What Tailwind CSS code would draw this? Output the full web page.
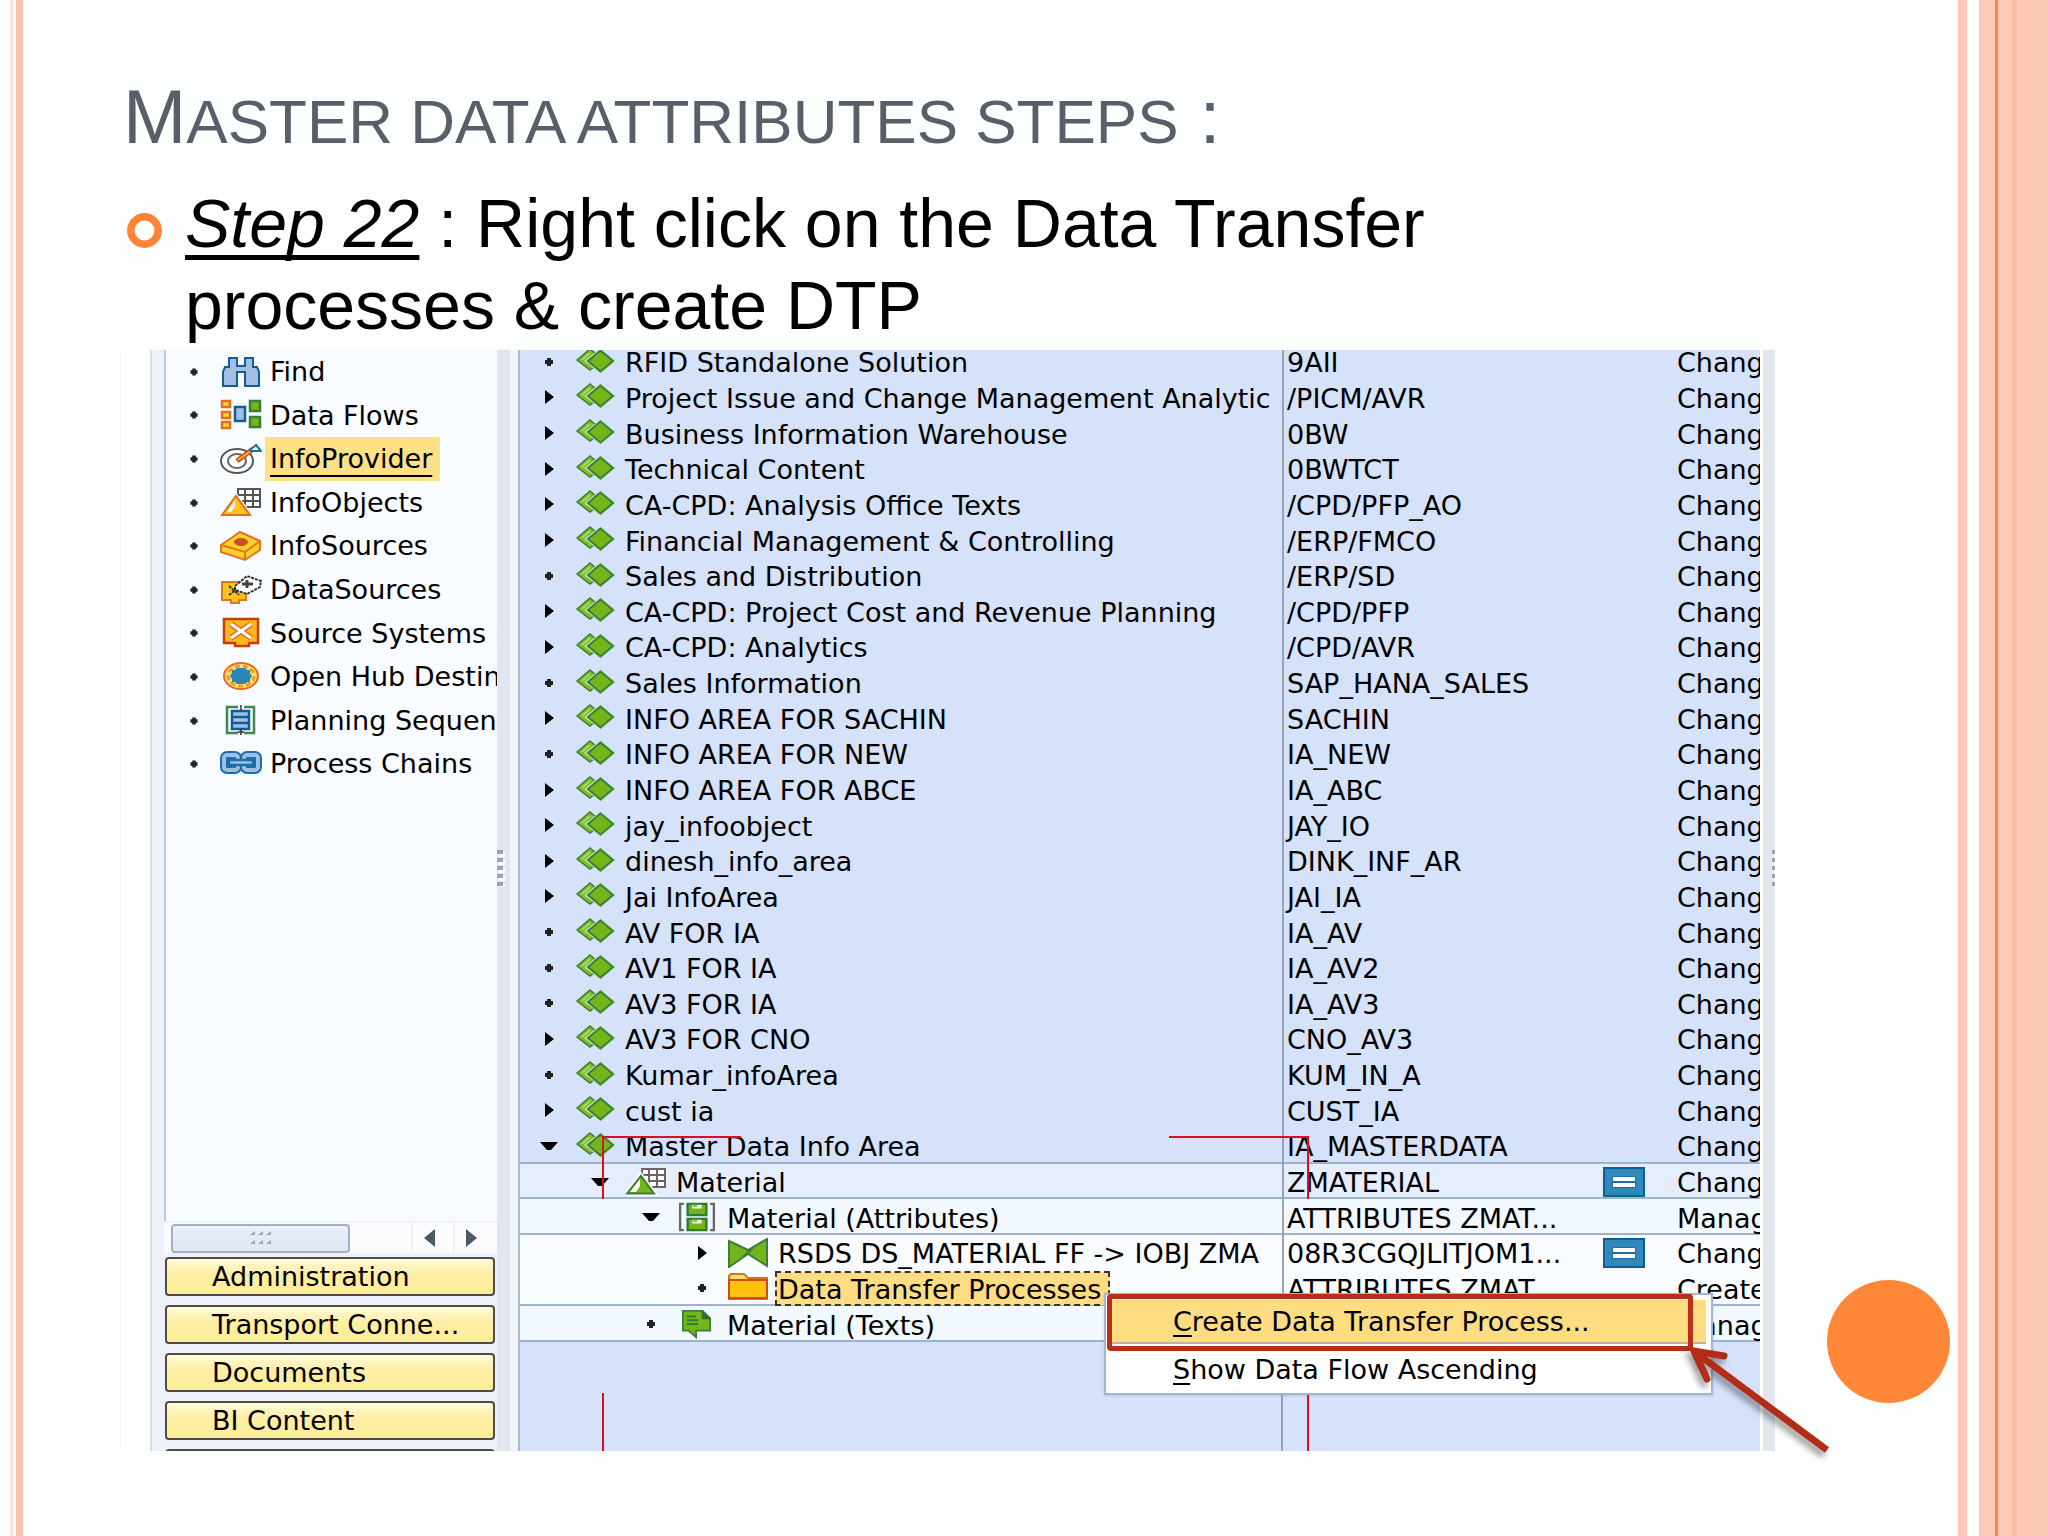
<!DOCTYPE html>
<html lang="en">
<head>
  <meta charset="UTF-8">
  <meta name="viewport" content="width=device-width, initial-scale=1.0">
  <title>Master data attributes steps</title>
  <script src="https://cdn.jsdelivr.net/npm/@tailwindcss/browser@4"></script>
</head>
<body class="bg-[#fdfffe] font-['Liberation_Sans',Arial,sans-serif] text-black">

  <!-- icon set -->
  <svg class="hidden" xmlns="http://www.w3.org/2000/svg">
    <symbol id="dot" viewBox="0 0 18 18"><path d="M7 5h4v2h2v4h-2v2H7v-2H5V7h2z" fill="#222"/></symbol>
    <symbol id="closed" viewBox="0 0 18 18"><path d="M5 2l9 7-9 7z" fill="#000"/></symbol>
    <symbol id="open" viewBox="0 0 18 18"><path d="M0 5h18l-7 8H7z" fill="#000"/></symbol>
    <symbol id="area" viewBox="0 0 42 30">
      <path d="M3 13L16 2l13 11-13 10z" fill="#7cbf1f" stroke="#3d7d3c" stroke-width="1.500"/>
      <path d="M8 13l8-7M12 16l7-8" stroke="#b5df90" stroke-width="1.500"/>
      <path d="M13 14L26.500 3.500 39 14 26.500 24.500z" fill="#74b61a" stroke="#b9dfa6" stroke-width="3.500"/>
      <path d="M14 14L26.500 3.500 39 14 26.500 24.500z" fill="#74b61a" stroke="#3d7d3c" stroke-width="2"/>
    </symbol>
    <symbol id="material" viewBox="0 0 42 30">
      <path d="M17 2h23v18H17z" fill="#fff" stroke="#6b6468" stroke-width="2"/>
      <path d="M17 8h23M17 14h23M24 2v18M32 2v18" stroke="#6b6468" stroke-width="2"/>
      <path d="M1 27L16 8l14 19z" fill="#74b61a" stroke="#fff" stroke-width="4"/>
      <path d="M2 26.500L16 9l13 17.500z" fill="#74b61a" stroke="#3d7d3c" stroke-width="2"/>
      <path d="M5 25L15 12v7l-4 6z" fill="#fff"/>
    </symbol>
    <symbol id="attributes" viewBox="0 0 42 32">
      <path d="M7 2H3v28h4M35 2h4v28h-4" fill="none" stroke="#6b6468" stroke-width="2.500"/>
      <path d="M11 2h20v12H11zM11 18h20v12H11z" fill="#74b61a" stroke="#2f7a33" stroke-width="2.500"/>
      <path d="M16 3h10v4H16zM16 19h10v4H16z" fill="#e9f6dc"/>
      <path d="M17 3h4v2h-4zM17 19h4v2h-4z" fill="#74b61a"/>
    </symbol>
    <symbol id="transform" viewBox="0 0 42 30">
      <path d="M2 3l19 9L40 1v27L21 16 2 29z" fill="#74b61a" stroke="#3d7d3c" stroke-width="2"/>
      <path d="M16 19L26 10" stroke="#3d7d3c" stroke-width="2"/>
    </symbol>
    <symbol id="folder" viewBox="0 0 42 30">
      <path d="M2 26V3l2-2h13l4 4h19v21z" fill="#ffd977" stroke="#d9701c" stroke-width="2"/>
      <path d="M2 7h38v18H2z" fill="#ffc20e" stroke="#d04a12" stroke-width="2"/>
    </symbol>
    <symbol id="texts" viewBox="0 0 42 32">
      <path d="M6 2h21l8 8v13H20v7l-8-7H6z" fill="#74b61a" stroke="#3d7d3c" stroke-width="2"/>
      <path d="M26 1l10 10H26z" fill="#2f6b3a"/>
      <path d="M10 8h10M10 12h12M10 16h12" stroke="#2f7a33" stroke-width="2"/>
    </symbol>
    <symbol id="equal" viewBox="0 0 42 30">
      <path d="M1 1h40v28H1z" fill="#3189bb" stroke="#0b5f93" stroke-width="2"/>
      <path d="M9 9h24v12H9z" fill="#1f6f9f"/>
      <path d="M10 10h22v4H10zM10 16h22v4H10z" fill="#fff"/>
    </symbol>

    <symbol id="find" viewBox="0 0 42 32">
      <path d="M9 2h8v8h8V2h8v9h4l2 5v14H25V16h-8v14H3V16l2-5h4z" fill="#a3bfe4" stroke="#0f5f96" stroke-width="2"/>
    </symbol>
    <symbol id="flows" viewBox="0 0 42 32">
      <path d="M2 2h8v6H2zM2 13h8v6H2zM2 23h8v6H2z" fill="#ffd23c" stroke="#e0701e" stroke-width="2.500"/>
      <path d="M15 8h10v14H15z" fill="#a3bfe4" stroke="#0f5f96" stroke-width="2.500"/>
      <path d="M30 2h10v10H30zM30 18h10v10H30z" fill="#74b61a" stroke="#3d7d3c" stroke-width="2.500"/>
    </symbol>
    <symbol id="provider" viewBox="0 0 42 32">
      <ellipse cx="17" cy="18" rx="16" ry="12" fill="#fff" stroke="#555" stroke-width="2"/>
      <ellipse cx="17" cy="18" rx="9" ry="7" fill="#fff" stroke="#666" stroke-width="2"/>
      <path d="M17 18L33 6" stroke="#c8501a" stroke-width="5"/>
      <path d="M18 17L32 7" stroke="#ffae2b" stroke-width="2"/>
      <path d="M30 7l6-5 5 6H31z" fill="#fff" stroke="#1a6fa8" stroke-width="2"/>
    </symbol>
    <symbol id="objects" viewBox="0 0 42 32">
      <path d="M18 2h22v18H18z" fill="#fff" stroke="#555" stroke-width="2"/>
      <path d="M18 8h22M18 14h22M25 2v18M33 2v18" stroke="#555" stroke-width="2"/>
      <path d="M1 28L16 8l15 20z" fill="#fff" stroke="#fff" stroke-width="3"/>
      <path d="M2 28L16 9l14 19z" fill="#ffc21e" stroke="#e0701e" stroke-width="2"/>
      <path d="M7 25l8-12v6l-4 6z" fill="#fff"/>
    </symbol>
    <symbol id="sources" viewBox="0 0 42 32">
      <path d="M1 15L20 2l20 9v9L25 30 1 22z" fill="#ffcf2e" stroke="#e0761e" stroke-width="2"/>
      <path d="M1 15l24 7 15-11M25 22v8" fill="none" stroke="#e0761e" stroke-width="2"/>
      <ellipse cx="21" cy="12" rx="7" ry="4" fill="#c9501a"/>
    </symbol>
    <symbol id="datasources" viewBox="0 0 42 32">
      <path d="M2 8h24v18h-7v3h-8v-3H2z" fill="#ffc21e" stroke="#e0761e" stroke-width="2"/>
      <path d="M9 12l10 9M9 21l8-6" stroke="#333" stroke-width="2" stroke-dasharray="3 1"/>
      <path d="M15 12L27 2l14 5-1 6-13 7-12-4z" fill="#fff" stroke="#333" stroke-width="2" stroke-dasharray="3 1"/>
      <path d="M22 10h11M27 6v8" stroke="#444" stroke-width="3"/>
    </symbol>
    <symbol id="systems" viewBox="0 0 42 32">
      <path d="M4 2h34v24h-9v3H15v-3H4z" fill="#ffb71c" stroke="#c63d12" stroke-width="2.500"/>
      <path d="M11 7l20 14M31 7L11 21" stroke="#e0701e" stroke-width="6"/>
      <path d="M11 7l20 14M31 7L11 21" stroke="#fff" stroke-width="3"/>
    </symbol>
    <symbol id="hub" viewBox="0 0 42 32">
      <ellipse cx="21" cy="15" rx="17" ry="13" fill="#ffe07a" stroke="#e0701e" stroke-width="2"/>
      <ellipse cx="21" cy="15" rx="13" ry="10" fill="none" stroke="#f59a1e" stroke-width="3" stroke-dasharray="5 3"/>
      <path d="M17 7h8l2 2h3v3l2 3-2 3v3h-3l-2 2h-8l-2-2h-3v-3l-2-3 2-3V9h3z" fill="#2d86b8"/>
    </symbol>
    <symbol id="sequence" viewBox="0 0 42 32">
      <path d="M18 2H7v26h11M24 2h10v26H24" fill="none" stroke="#3d8a4c" stroke-width="2.500"/>
      <path d="M12 6h17v18H12z" fill="#a3bfe4" stroke="#0f5f96" stroke-width="2.500"/>
      <path d="M12 12h17M12 18h17" stroke="#0f5f96" stroke-width="2.500"/>
      <path d="M21 0v6M21 24v6M18 27h6" stroke="#333" stroke-width="1.500"/>
    </symbol>
    <symbol id="chains" viewBox="0 0 42 32">
      <rect x="4" y="7" width="14" height="15" rx="3" fill="none" stroke="#1a6fa8" stroke-width="8"/>
      <rect x="24" y="7" width="14" height="15" rx="3" fill="none" stroke="#1a6fa8" stroke-width="8"/>
      <rect x="4" y="7" width="14" height="15" rx="3" fill="none" stroke="#9dbfe3" stroke-width="4"/>
      <rect x="24" y="7" width="14" height="15" rx="3" fill="none" stroke="#9dbfe3" stroke-width="4"/>
      <rect x="9" y="12" width="24" height="5" fill="#9dbfe3" stroke="#1a6fa8" stroke-width="2.500"/>
    </symbol>
    <symbol id="grip" viewBox="0 0 8 37">
      <path d="M2 2h6v5H2zM2 10h6v5H2zM2 18h6v5H2zM2 26h6v5H2zM2 34h6v3H2z" fill="#fff"/>
      <path d="M0 0h6v4H0zM0 8h6v4H0zM0 16h6v4H0zM0 24h6v4H0zM0 32h6v4H0z" fill="#9aa3ad"/>
    </symbol>
  </svg>

  <div class="flex min-h-screen overflow-hidden relative">
    <!-- left stripes -->
    <div class="w-[3px] ml-[10px] bg-[#fee0d8]"></div>
    <div class="w-[7px] ml-[3px] bg-[#febfb0]"></div>

    <main class="flex-1 min-w-0 pl-[97px] pt-[75px]">
      <h1 class="pl-[3px] text-[62px] leading-[84px] uppercase text-[#5a5e6b] first-letter:text-[76px]">Master data attributes steps<span class="text-[76px]"> :</span></h1>

      <div class="flex mt-[18px] pl-[7px] text-[68px] leading-[82px]">
        <svg class="w-[35px] h-[35px] mt-[31px] mr-[23px] shrink-0" viewBox="0 0 35 35"><circle cx="17.500" cy="17.500" r="13.700" fill="none" stroke="#ff8436" stroke-width="7.500"/></svg>
        <p class="max-w-[1300px]"><em class="underline decoration-[5px] underline-offset-[8px] [text-decoration-skip-ink:none]">Step 22</em> : Right click on the Data Transfer processes &amp; create DTP</p>
      </div>

      <!-- SAP screen -->
      <div class="relative flex h-[1101px] mt-[4px] mr-[183px] border-l border-[#f8f4f6] font-['DejaVu_Sans',Verdana,sans-serif] text-[27px] leading-[31px]">
        <aside class="flex flex-col w-[347px] ml-[29px] pl-[12px] border-l-2 border-[#d8dcec] bg-[#eef1f9] shrink-0 overflow-hidden">
          <nav class="h-[871px] border-l-2 border-[#b9c8e4] bg-[#f8fbff] overflow-hidden shrink-0">
            <ul id="nav" class="grid grid-rows-10 h-[436px]"></ul>
          </nav>
          <div class="flex items-center h-[30px] mt-[2px] bg-[#fcfcff] shrink-0">
            <div class="flex items-center justify-center w-[179px] h-[29px] ml-[7px] border-2 border-[#a3b0c2] rounded-sm bg-linear-to-b from-[#eaf0fa] to-[#dfe7f5]">
              <svg class="w-[22px] h-[14px]" viewBox="0 0 22 14"><path d="M0 4h5V0zM8 4h5V0zM16 4h5V0zM0 13h5V9zM8 13h5V9zM16 13h5V9z" fill="#98a3b4"/></svg>
            </div>
            <button aria-label="Scroll left" class="ml-auto w-[42px] h-full flex items-center justify-center border-l-2 border-[#f0f2f8]"><svg class="w-[12px] h-[18px] mr-[8px]" viewBox="0 0 12 18"><path d="M12 0v18L1 9z" fill="#4a5a66"/></svg></button>
            <button aria-label="Scroll right" class="w-[44px] h-full flex items-center justify-center border-l-2 border-[#f0f2f8]"><svg class="w-[12px] h-[18px] mr-[8px]" viewBox="0 0 12 18"><path d="M0 0v18L11 9z" fill="#4a5a66"/></svg></button>
          </div>
          <div id="buttons" class="flex flex-col flex-1 min-h-0 gap-[9px] mt-[4px] ml-[1px] mr-[2px] overflow-hidden"></div>
        </aside>

        <!-- splitter -->
        <div class="flex items-center w-[13px] bg-[#dfe6ef] shrink-0">
          <svg class="w-[8px] h-[37px] mb-[64px]"><use href="#grip"/></svg>
        </div>
        <div class="w-[8px] bg-[#f1f4f9] shrink-0"></div>

        <section class="flex-1 min-w-0 border-l-2 border-[#a9bccb] bg-[#d6e2fa] overflow-hidden flex flex-col">
          <table class="w-full h-[998px] mt-[-6px] table-fixed border-collapse whitespace-nowrap shrink-0">
            <colgroup><col><col class="w-[394px]"><col class="w-[83px]"></colgroup>
            <tbody id="tree"></tbody>
          </table>
          <div class="flex flex-1">
            <div class="flex-1 border-r-2 border-[#97a3bb]"></div>
            <div class="w-[477px]"></div>
          </div>
        </section>
        <div class="flex items-center justify-end w-[15px] border-l-3 border-white bg-[#e0e7ef] shrink-0">
          <div class="overflow-hidden w-[3px] mb-[64px]"><svg class="w-[8px] h-[37px]"><use href="#grip"/></svg></div>
        </div>

        <!-- selection guides -->
        <svg class="absolute left-[-1px] top-0 w-[1655px] h-[1101px] pointer-events-none" viewBox="0 0 1655 1101" fill="none" stroke="#d9101c" stroke-width="2">
          <path d="M621 787H483V849M1049 787H1188V849M483 1043V1101M1188 1043V1101"/>
        </svg>

        <!-- context menu -->
        <div role="menu" class="absolute left-[983px] top-[943px] w-[609px] h-[102px] pt-[5px] pl-[6px] pr-[5px] bg-white border-2 border-[#a4b4d4] shadow-sm">
          <button role="menuitem" class="block w-full h-[44px] pl-[61px] text-left bg-[#fedd82] border-b-2 border-[#b9b3a6]"><u class="decoration-2 underline-offset-4">C</u>reate Data Transfer Process...</button>
          <button role="menuitem" class="block w-full h-[44px] mt-[3px] pl-[61px] text-left"><u class="decoration-2 underline-offset-4">S</u>how Data Flow Ascending</button>
        </div>
        <div class="absolute left-[986px] top-[944px] w-[586px] h-[57px] border-[5px] border-[#b82e1a] rounded-sm pointer-events-none"></div>
        <svg class="absolute left-[1560px] top-[990px] w-[170px] h-[130px] pointer-events-none drop-shadow-[-3px_5px_3px_rgba(0,0,0,0.4)]" viewBox="0 0 170 130" fill="none" stroke="#b22c18" stroke-width="7">
          <path d="M146 110L14 12"/>
          <path d="M43 16L13 11 26 39" stroke-linecap="round"/>
        </svg>
      </div>
    </main>

    <!-- right stripes -->
    <div class="w-[9px] bg-[#fec8b9]"></div>
    <div class="w-[12px] bg-white"></div>
    <div class="w-[16px] bg-[#fdc9b8]"></div>
    <div class="w-[3px] bg-[#f5893f]"></div>
    <div class="w-[14px] bg-[#fdc9b8]"></div>
    <div class="w-[5px] bg-[#fabca2]"></div>
    <div class="w-[31px] bg-[#fcc9b3]"></div>

    <div class="absolute right-[98px] top-[1280px] w-[123px] h-[123px] rounded-full bg-[#ff8738]"></div>
  </div>

  <script>
    const navItems = [
      ['find', 'Find'], ['flows', 'Data Flows'], ['provider', 'InfoProvider'], ['objects', 'InfoObjects'],
      ['sources', 'InfoSources'], ['datasources', 'DataSources'], ['systems', 'Source Systems'],
      ['hub', 'Open Hub Destin'], ['sequence', 'Planning Sequen'], ['chains', 'Process Chains']
    ];

    // expander, text, technical name, action, level, icon
    const rows = [
      ['dot', 'RFID Standalone Solution', '9AII'],
      ['closed', 'Project Issue and Change Management Analytic', '/PICM/AVR'],
      ['closed', 'Business Information Warehouse', '0BW'],
      ['closed', 'Technical Content', '0BWTCT'],
      ['closed', 'CA-CPD: Analysis Office Texts', '/CPD/PFP_AO'],
      ['closed', 'Financial Management & Controlling', '/ERP/FMCO'],
      ['dot', 'Sales and Distribution', '/ERP/SD'],
      ['closed', 'CA-CPD: Project Cost and Revenue Planning', '/CPD/PFP'],
      ['closed', 'CA-CPD: Analytics', '/CPD/AVR'],
      ['dot', 'Sales Information', 'SAP_HANA_SALES'],
      ['closed', 'INFO AREA FOR SACHIN', 'SACHIN'],
      ['dot', 'INFO AREA FOR NEW', 'IA_NEW'],
      ['closed', 'INFO AREA FOR ABCE', 'IA_ABC'],
      ['closed', 'jay_infoobject', 'JAY_IO'],
      ['closed', 'dinesh_info_area', 'DINK_INF_AR'],
      ['closed', 'Jai InfoArea', 'JAI_IA'],
      ['dot', 'AV FOR IA', 'IA_AV'],
      ['dot', 'AV1 FOR IA', 'IA_AV2'],
      ['dot', 'AV3 FOR IA', 'IA_AV3'],
      ['closed', 'AV3 FOR CNO', 'CNO_AV3'],
      ['dot', 'Kumar_infoArea', 'KUM_IN_A'],
      ['closed', 'cust ia', 'CUST_IA'],
      ['open', 'Master Data Info Area', 'IA_MASTERDATA'],
      ['open', 'Material', 'ZMATERIAL', 'Chang', 1, 'material'],
      ['open', 'Material (Attributes)', 'ATTRIBUTES ZMAT...', 'Manag', 2, 'attributes'],
      ['closed', 'RSDS DS_MATERIAL FF -> IOBJ ZMA', '08R3CGQJLITJOM1...', 'Chang', 3, 'transform'],
      ['dot', 'Data Transfer Processes', 'ATTRIBUTES ZMAT...', 'Create', 3, 'folder'],
      ['dot', 'Material (Texts)', '', 'Manag', 2, 'texts']
    ];

    const rowStyle = {
      22: 'shadow-[inset_0_-2px_0_#9fb2cc]',
      23: 'shadow-[inset_0_-2px_0_#9fb2cc] bg-[#e6eefe]',
      24: 'shadow-[inset_0_-2px_0_#9fb2cc] bg-[#f1f8ff]',
      25: 'bg-[#f9fcff]',
      26: 'shadow-[inset_0_-2px_0_#9fb2cc] bg-[#f9fcff]',
      27: 'shadow-[inset_0_-2px_0_#9fb2cc] bg-[#f1f8ff]'
    };

    const esc = s => s.replace('&', '&amp;').replace('>', '&gt;');
    const use = (id, cls) => `<svg class="${cls}"><use href="#${id}"/></svg>`;

    document.getElementById('nav').innerHTML = navItems.map(([icon, label]) => `
      <li class="flex items-center whitespace-nowrap">
        ${use('dot', 'w-[16px] h-[16px] ml-[20px] mr-[18px] shrink-0')}
        ${use(icon, 'w-[42px] h-[32px] mr-[3px] shrink-0')}
        <a href="#" class="h-full pl-[5px] pr-[8px] pt-[6px] ${icon === 'provider' ? 'bg-[#fee085] underline decoration-2 underline-offset-[7px]' : ''}">${label}</a>
      </li>`).join('');

    document.getElementById('buttons').innerHTML = ['Administration', 'Transport Conne...', 'Documents', 'BI Content', ''].map(label => `
      <button class="h-[39px] shrink-0 pl-[45px] text-left border-2 border-[#4d4d45] rounded-sm bg-linear-to-b from-[#fff8d4] via-[#feeea0] to-[#fdee9c] shadow-[inset_0_2px_0_#fffbe6]">${label}</button>`).join('');

    document.getElementById('tree').innerHTML = rows.map(([exp, text, name, action = 'Chang', level = 0, icon = 'area'], i) => `
      <tr class="${rowStyle[i] || ''}">
        <td class="p-0 overflow-hidden border-r-2 border-[#97a3bb]">
          <div class="flex items-center h-[33px]" style="padding-left:${9 + level * 51}px">
            <span class="flex justify-center w-[40px] shrink-0">${use(exp, 'w-[18px] h-[18px]')}</span>
            <span class="flex justify-center w-[52px] shrink-0">${use(icon, 'w-[42px] h-[30px]')}</span>
            <span class="ml-[2px] pl-[2px] pt-[2px] ${icon === 'folder' ? 'pr-[8px] bg-[#fedd82] outline-2 -outline-offset-1 outline-dashed outline-[#333]' : ''}">${esc(text)}</span>
          </div>
        </td>
        <td class="p-0 pl-[3px] overflow-hidden">
          <div class="flex items-center h-[33px]"><span class="w-[316px] pt-[2px]">${name}</span>${i === 23 || i === 25 ? use('equal', 'w-[42px] h-[30px]') : ''}</div>
        </td>
        <td class="p-0 overflow-hidden"><div class="flex items-center h-[33px] pt-[2px]">${action}</div></td>
      </tr>`).join('');
  </script>
</body>
</html>
